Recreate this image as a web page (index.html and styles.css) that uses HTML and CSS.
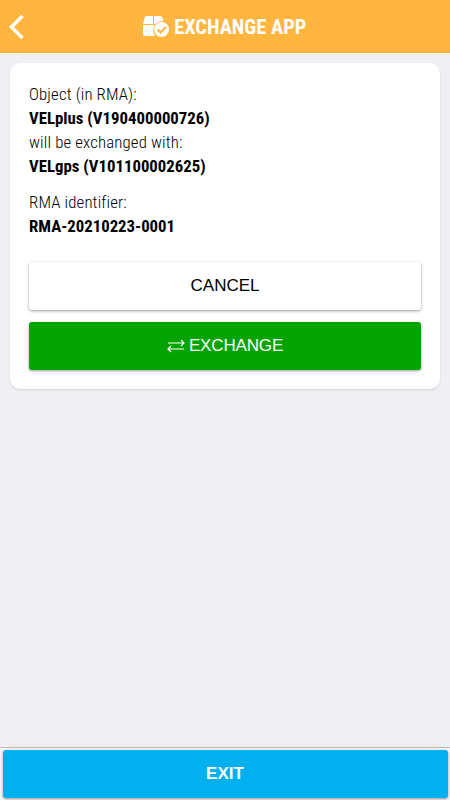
FILE: index.html
```html
<!DOCTYPE html>
<html lang="en">
<head>
<meta charset="utf-8">
<title>Exchange App</title>
<link rel="stylesheet" href="styles.css">
</head>
<body>
<header class="bar">
<svg class="back" viewBox="0 0 16 26"><path d="M14.500 2 3.500 13l11 11"/></svg>
<h1 class="title">
<svg class="logo" viewBox="0 0 27 22"><path d="M4 0h6v8H0l1.500-6Q2 0 4 0zM11 0h6q2 0 2.500 2l1 3Q15 5 12.500 8H11zM0 9h11.500q-3 6 .5 11H2q-2 0-2-2z"/><circle cx="18.500" cy="13.500" r="7.500"/><path class="check" d="m14.500 13.500 3 3 5.500-5.500"/></svg>
<span>EXCHANGE APP</span>
</h1>
</header>
<main class="main">
<section class="card">
<p class="info"><span class="label">Object (in RMA):</span><b class="value">VELplus (V190400000726)</b><span class="label">will be exchanged with:</span><b class="value">VELgps (V101100002625)</b></p>
<p class="info"><span class="label">RMA identifier:</span><b class="value">RMA-20210223-0001</b></p>
<div class="actions">
<button class="btn cancel">CANCEL</button>
<button class="btn exchange"><svg class="arrows" viewBox="0 0 18 14"><path d="M1 4h16M14 1l3 3-3 3M17 10H1M4 7l-3 3 3 3"/></svg>EXCHANGE</button>
</div>
</section>
</main>
<footer class="footer"><button class="btn exit">EXIT</button></footer>
</body>
</html>
```
FILE: styles.css
```css
* { box-sizing: border-box; }
body { margin: 0; height: 800px; display: flex; flex-direction: column; background: #efeff4; font-family: "Roboto Condensed", Roboto, sans-serif; font-stretch: 75%; color: #000; }
.bar { height: 52.5px; background: #ffb53e; display: grid; grid-template-columns: 30px 1fr 30px; align-items: center; color: #fff; }
.back { width: 16px; height: 26px; margin: 1px 0 0 8px; fill: none; stroke: #fff; stroke-width: 3.5; }
.title { margin: 1px 1px 0 0; display: flex; justify-content: center; align-items: center; gap: 4.5px; font-size: 20.4px; white-space: nowrap; }
.logo { width: 27px; height: 22px; fill: #fff; }
.logo .check { fill: none; stroke: #ffb53e; stroke-width: 2; }
.label, .value { display: block; white-space: nowrap; }
.label { letter-spacing: 0.15px; }
.main { flex: 1; padding: 10px; }
.card { height: 326px; background: #fff; border-radius: 10px; padding: 19px; box-shadow: 0 1px 2px #0002; }
.info { margin: 0 0 12px; font-size: 16.8px; line-height: 24px; font-weight: 350; }
.actions { display: flex; flex-direction: column; gap: 12px; margin-top: 24px; }
.btn { border: 0; height: 48px; border-radius: 3px; font: 17px "Liberation Sans", sans-serif; display: flex; align-items: center; justify-content: center; gap: 5px; box-shadow: 0 1px 3px #0006; }
.cancel { background: #fff; color: #000; }
.exchange { background: #04a400; color: #fff; gap: 4px; letter-spacing: -0.15px; }
.arrows { width: 18px; height: 14px; fill: none; stroke: #fff; stroke-width: 1.2; }
.footer { height: 53px; border-top: 1px solid #bbb; background: #f7f7f8; padding: 1.5px 2.5px; }
.exit { width: 100%; background: #03b0ef; color: #fff; font-weight: bold; }
```
